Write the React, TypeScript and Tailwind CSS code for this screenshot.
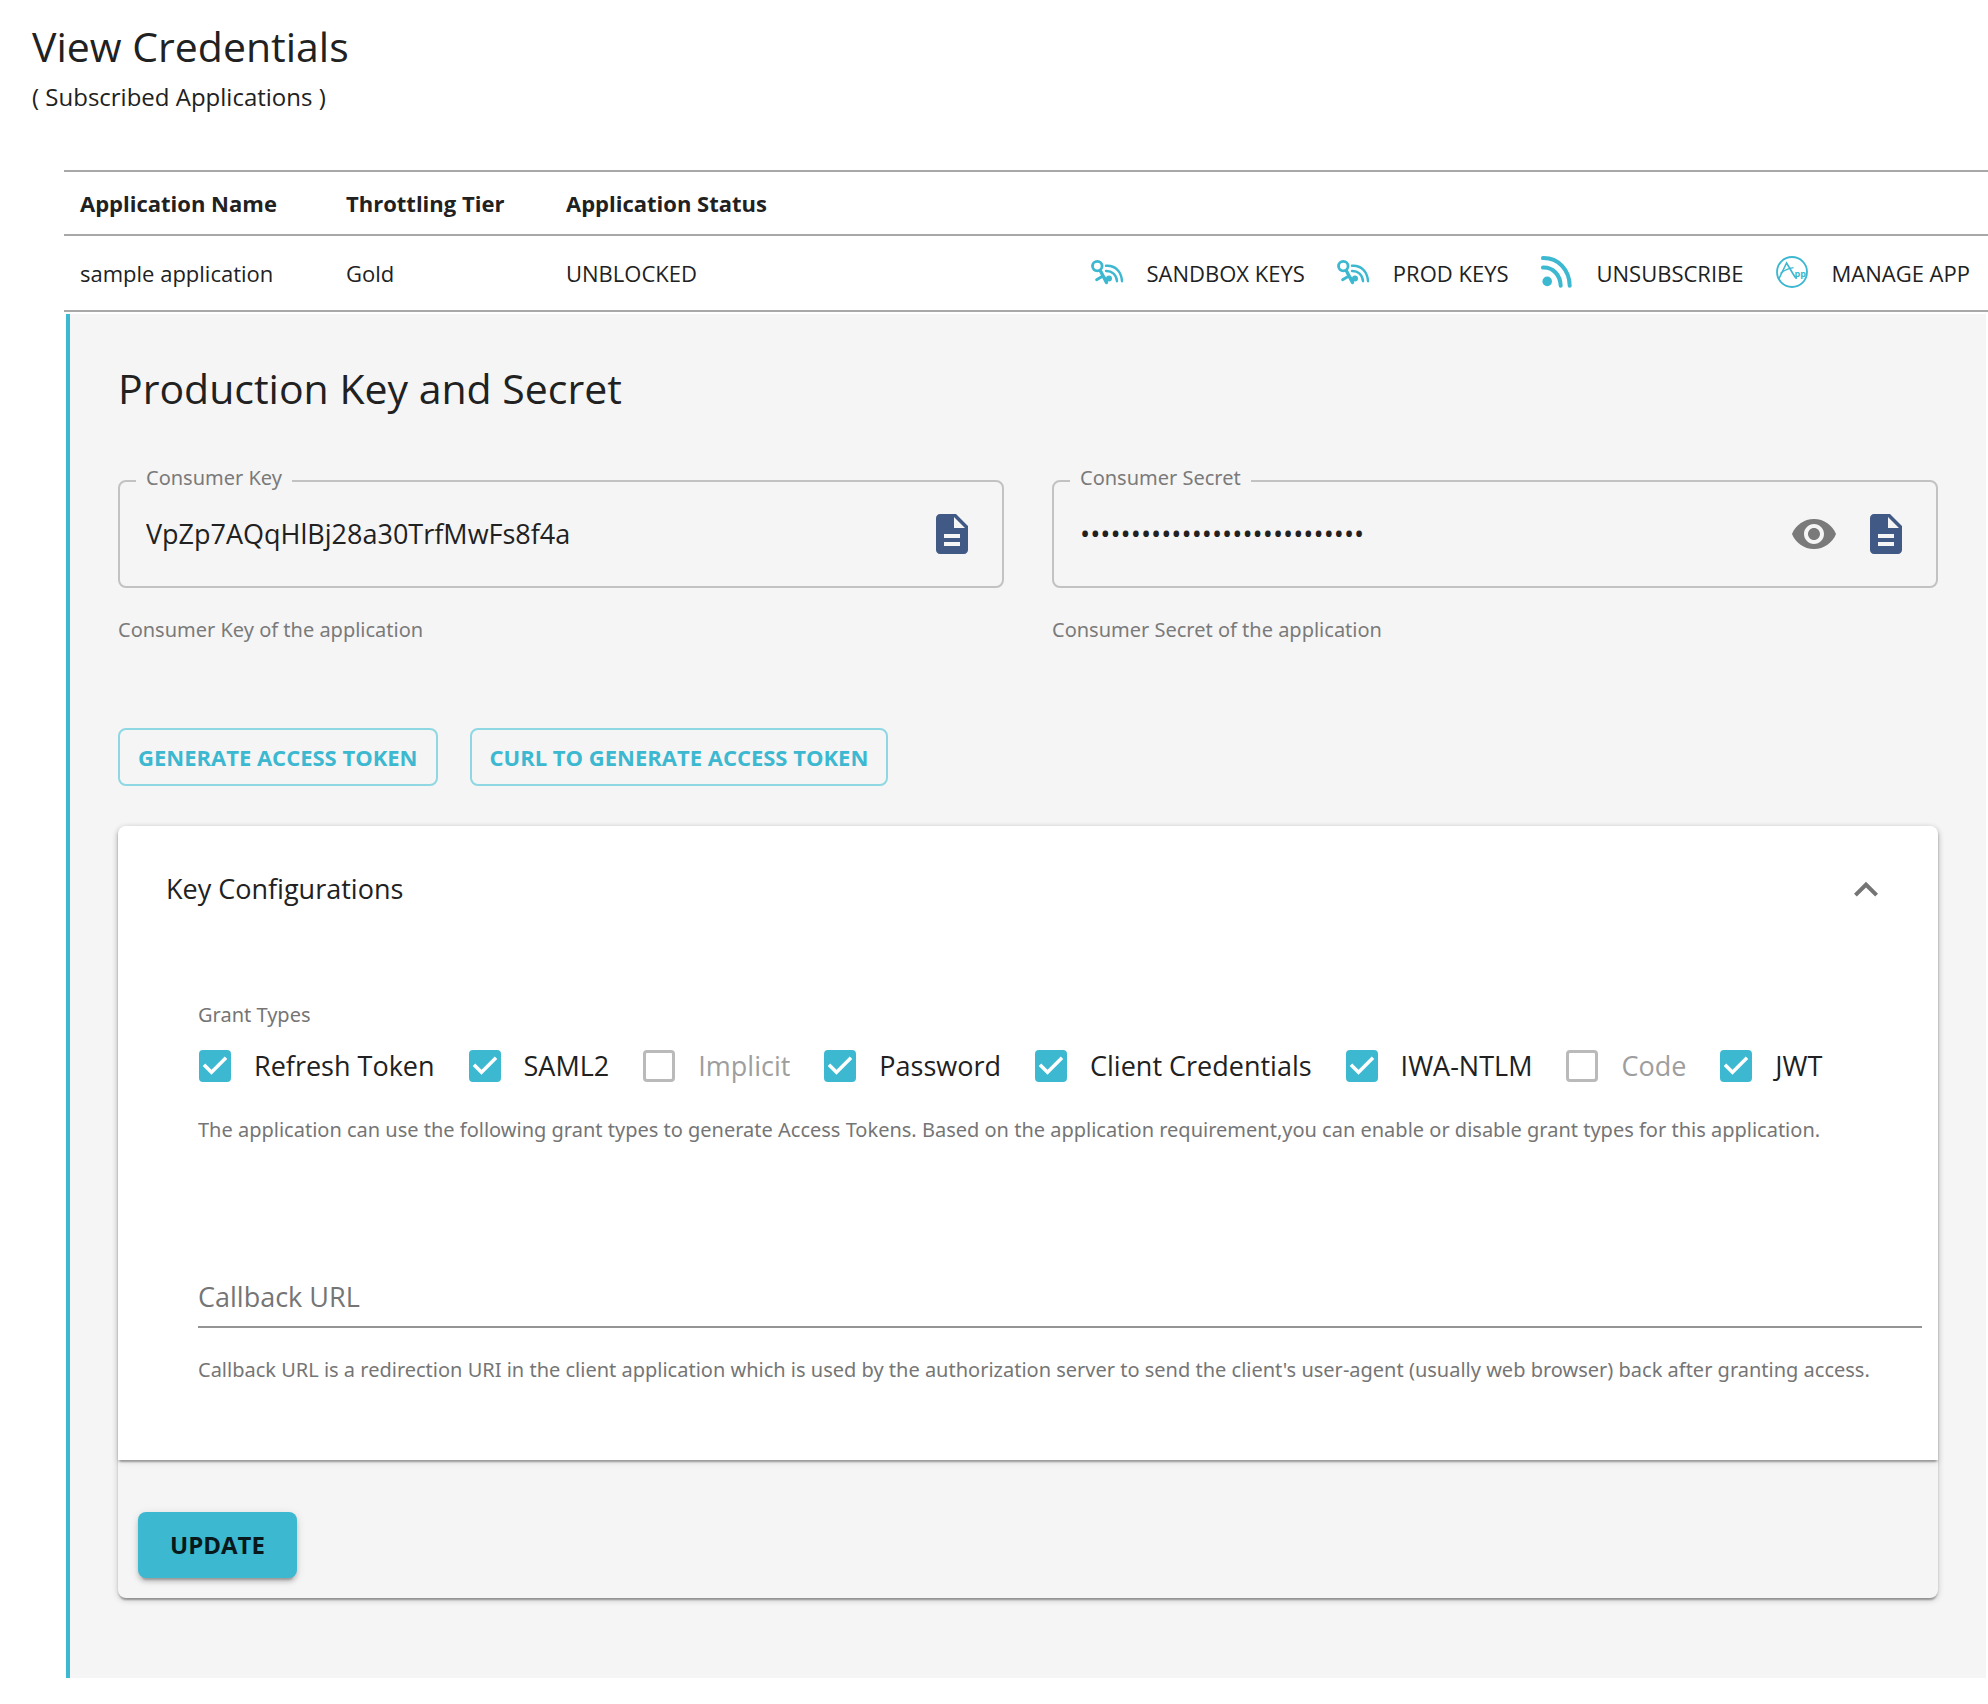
import React, { useState } from 'react';

function KeysIcon() {
  return (
    <svg viewBox="0 0 32 32" className="mb-0.5 size-8 shrink-0" fill="none" stroke="#3cb8d0" strokeLinecap="round" aria-hidden="true">
      <circle cx="6.3" cy="10.1" r="4.8" strokeWidth="2.8" />
      <path d="M9.500 15 15.500 26.500" strokeWidth="3.400" />
      <path d="M5.600 23.800 11.500 20.200" strokeWidth="2.800" />
      <path d="M12 20.500 16 24" strokeWidth="2.800" />
      <circle cx="18" cy="22.400" r="3" fill="#3cb8d0" stroke="none" />
      <path d="M15 9.800C24 9 30.500 15.600 31 25.200M15 15C21 14.800 25.600 18.600 26 25.200" strokeWidth="2.400" />
    </svg>
  );
}

function FeedIcon() {
  return (
    <svg viewBox="0 0 32 32" className="mb-0.5 size-8 shrink-0" fill="none" stroke="#3cb8d0" strokeWidth="4" strokeLinecap="round" aria-hidden="true">
      <circle cx="6.2" cy="25.4" r="4.8" fill="#3cb8d0" stroke="none" />
      <path d="M2 11.6C12 11.2 19.4 19 19.7 29.8M2 2.1C17.5 1.8 28.4 14 28.7 29.8" />
    </svg>
  );
}

function AppIcon() {
  return (
    <svg viewBox="0 0 32 32" className="mb-0.5 size-8 shrink-0" fill="none" stroke="#3cb8d0" aria-hidden="true">
      <circle cx="16" cy="16" r="15" strokeWidth="1.8" />
      <path d="M2.8 23 10.6 7 18 19.5C18.8 21 19.6 21.8 21 22" strokeWidth="1.6" />
      <path d="M4.5 17.2C8 14.5 12 12.5 17.5 11.6" strokeWidth="1.2" />
      <text x="18.6" y="20.5" fontSize="9" fontWeight="700" fontFamily="Open Sans, sans-serif" fill="#3cb8d0" stroke="none">pp</text>
    </svg>
  );
}

function CopyIcon() {
  return (
    <svg viewBox="0 0 24 24" className="size-12" fill="#415a85" aria-hidden="true">
      <path d="M14 2H6c-1.1 0-1.99.9-1.99 2L4 20c0 1.1.89 2 1.99 2H18c1.1 0 2-.9 2-2V8l-6-6zm2 16H8v-2h8v2zm0-4H8v-2h8v2zm-3-5V3.500L18.500 9H13z" />
    </svg>
  );
}

function EyeIcon() {
  return (
    <svg viewBox="0 0 24 24" className="size-12" fill="#7a7a7a" aria-hidden="true">
      <path d="M12 4.500C7 4.500 2.730 7.610 1 12c1.730 4.390 6 7.500 11 7.500s9.270-3.110 11-7.500c-1.730-4.390-6-7.500-11-7.500zM12 17c-2.760 0-5-2.240-5-5s2.240-5 5-5 5 2.240 5 5-2.240 5-5 5zm0-8c-1.660 0-3 1.340-3 3s1.340 3 3 3 3-1.340 3-3-1.340-3-3-3z" />
    </svg>
  );
}

function Field({ id, label, helper, value, secret }: { id: string; label: string; helper: string; value: string; secret?: boolean }) {
  const [shown, setShown] = useState(!secret);
  return (
    <div className="min-w-0 flex-1">
      <div className="relative flex h-[108px] items-center rounded-lg border-2 border-[#c2c2c2] pr-[26px] pl-[26px]">
        <label htmlFor={id} className="absolute -top-[18px] left-4 bg-[#f5f5f5] px-[10px] font-['Noto_Sans',sans-serif] text-[20px] leading-7 text-[#7a7a7a]">
          {label}
        </label>
        <input id={id} type={shown ? 'text' : 'password'} readOnly value={value} className="min-w-0 flex-1 bg-transparent text-[27px] leading-10 outline-none" />
        {secret && (
          <button type="button" aria-label="Toggle visibility" onClick={() => setShown(!shown)} className="mr-6">
            <EyeIcon />
          </button>
        )}
        <button type="button" aria-label={`Copy ${label}`}>
          <CopyIcon />
        </button>
      </div>
      <p className="mt-[26px] font-['Noto_Sans',sans-serif] text-[20px] leading-8 text-[#7a7a7a]">{helper}</p>
    </div>
  );
}

function Grant({ label, on, disabled }: { label: string; on?: boolean; disabled?: boolean }) {
  return (
    <label className={disabled ? 'flex items-center gap-[18px] text-[#9e9e9e]' : 'flex items-center gap-[18px]'}>
      <span className="grid size-[42px] place-items-center">
        <input
          type="checkbox"
          defaultChecked={on}
          disabled={disabled}
          className="peer col-start-1 row-start-1 size-8 appearance-none rounded-[4px] border-[3px] border-[#bababa] checked:border-[#3cb8d0] checked:bg-[#3cb8d0]"
        />
        <svg viewBox="0 0 24 24" className="pointer-events-none invisible col-start-1 row-start-1 size-[42px] peer-checked:visible" fill="#fff" aria-hidden="true">
          <path d="M10 17l-5-5 1.410-1.410L10 14.170l7.590-7.590L19 8l-9 9z" />
        </svg>
      </span>
      {label}
    </label>
  );
}

const grants = [
  { label: 'Refresh Token', on: true },
  { label: 'SAML2', on: true },
  { label: 'Implicit', disabled: true },
  { label: 'Password', on: true },
  { label: 'Client Credentials', on: true },
  { label: 'IWA-NTLM', on: true },
  { label: 'Code', disabled: true },
  { label: 'JWT', on: true },
];

const actions = [
  { label: 'SANDBOX KEYS', icon: <KeysIcon /> },
  { label: 'PROD KEYS', icon: <KeysIcon /> },
  { label: 'UNSUBSCRIBE', icon: <FeedIcon /> },
  { label: 'MANAGE APP', icon: <AppIcon /> },
];

export default function App() {
  const [open, setOpen] = useState(true);
  return (
    <div className="min-h-screen bg-white pt-[22px] font-['Open_Sans',sans-serif] text-[#212121]">
      <header className="px-8">
        <h1 className="text-[41px] leading-[48px]">View Credentials</h1>
        <p className="mt-[11px] text-[24px] leading-8">( Subscribed Applications )</p>
      </header>

      <main className="mt-[57px] ml-16">
        <table className="w-full border-collapse text-left text-[22px] leading-8">
          <thead>
            <tr className="h-16 border-y-2 border-[#a8a8a8]">
              <th className="w-[266px] px-4 font-bold">Application Name</th>
              <th className="w-[220px] px-4 font-bold">Throttling Tier</th>
              <th className="px-4 font-bold">Application Status</th>
              <th aria-label="Actions" />
            </tr>
          </thead>
          <tbody>
            <tr className="h-[76px] border-b-2 border-[#a8a8a8]">
              <td className="px-4">sample application</td>
              <td className="px-4">Gold</td>
              <td className="px-4">UNBLOCKED</td>
              <td>
                <div className="flex justify-end gap-8 pr-[18px]">
                  {actions.map((a) => (
                    <button key={a.label} type="button" className="flex items-center gap-6 whitespace-nowrap">
                      {a.icon}
                      {a.label}
                    </button>
                  ))}
                </div>
              </td>
            </tr>
          </tbody>
        </table>

        <section className="mx-[2px] mt-[2px] border-l-4 border-[#3cb8d0] bg-[#f5f5f5] pt-[46px] pr-12 pb-20 pl-12">
          <h2 className="text-[41px] leading-[56px]">Production Key and Secret</h2>

          <div className="mt-16 flex gap-12">
            <Field id="consumer-key" label="Consumer Key" helper="Consumer Key of the application" value="VpZp7AQqHlBj28a30TrfMwFs8f4a" />
            <Field id="consumer-secret" label="Consumer Secret" helper="Consumer Secret of the application" value="a8Kd0sLq93nfPz71mWvYt5RbXe2c" secret />
          </div>

          <div className="mt-[82px] flex gap-8 text-[22px] leading-8 font-bold text-[#3cb8d0]">
            <button type="button" className="h-[58px] rounded-lg border-2 border-[#8fd8e3] px-[18px]">GENERATE ACCESS TOKEN</button>
            <button type="button" className="h-[58px] rounded-lg border-2 border-[#8fd8e3] px-[18px]">CURL TO GENERATE ACCESS TOKEN</button>
          </div>

          <div className="mt-10 rounded-lg shadow-[0_4px_2px_-2px_rgba(0,0,0,0.2),0_2px_2px_rgba(0,0,0,0.14),0_2px_6px_rgba(0,0,0,0.2)]">
            <div className="rounded-t-lg bg-white shadow-[0_4px_2px_-2px_rgba(0,0,0,0.2),0_2px_2px_rgba(0,0,0,0.14),0_2px_6px_rgba(0,0,0,0.12)]">
              <button type="button" aria-expanded={open} onClick={() => setOpen(!open)} className="flex h-[126px] w-full items-center justify-between px-12 text-[27px] leading-10">
                Key Configurations
                <svg viewBox="0 0 24 24" className="size-12" fill="#757575" aria-hidden="true">
                  <path d="M12 8.400l-6 6 1.410 1.410L12 11.230l4.590 4.580L18 14.400z" />
                </svg>
              </button>
              {open && (
                <div className="pt-[49px] pr-4 pb-[76px] pl-20">
                  <p className="font-['Noto_Sans',sans-serif] text-[20px] leading-7 text-[#757575]">Grant Types</p>
                  <div className="mt-4 -ml-1 flex flex-wrap gap-x-[29px] text-[27px] leading-[42px]">
                    {grants.map((g) => (
                      <Grant key={g.label} {...g} />
                    ))}
                  </div>
                  <p className="mt-[29px] font-['Noto_Sans',sans-serif] text-[20px] leading-7 text-[#757575]">
                    The application can use the following grant types to generate Access Tokens. Based on the application requirement,you can enable or disable grant types for this application.
                  </p>
                  <div className="mt-[133px] border-b-2 border-[#949494] pb-[9px]">
                    <input aria-label="Callback URL" placeholder="Callback URL" className="block h-10 w-full bg-transparent text-[27px] leading-10 outline-none placeholder:text-[#757575]" />
                  </div>
                  <p className="mt-7 font-['Noto_Sans',sans-serif] text-[20px] leading-7 text-[#757575]">
                    Callback URL is a redirection URI in the client application which is used by the authorization server to send the client's user-agent (usually web browser) back after granting access.
                  </p>
                </div>
              )}
            </div>
            <div className="px-5 pt-[52px] pb-5">
              <button type="button" className="h-[66px] rounded-lg bg-[#3cb8d0] px-8 text-[24px] leading-8 font-bold text-[#08181b] shadow-[0_6px_2px_-4px_rgba(0,0,0,0.2),0_4px_4px_rgba(0,0,0,0.14),0_2px_10px_rgba(0,0,0,0.12)]">
                UPDATE
              </button>
            </div>
          </div>
        </section>
      </main>
    </div>
  );
}
